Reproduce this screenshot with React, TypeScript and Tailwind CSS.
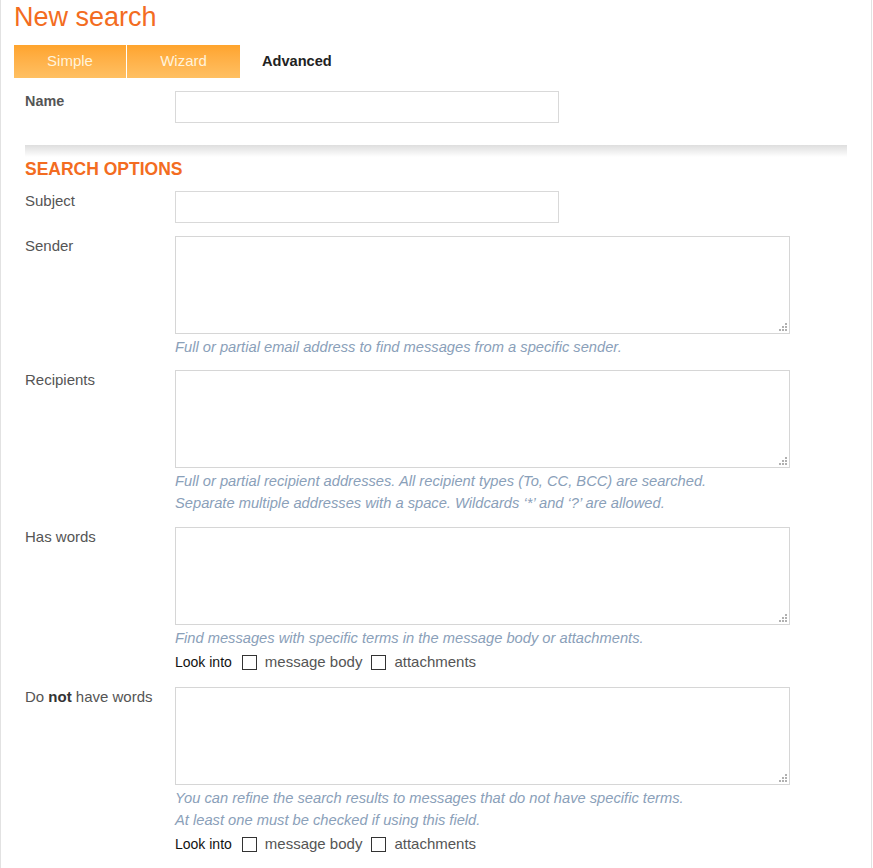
import React from "react";

const hint = "text-[14.7px] italic leading-[22px] text-[#8aa0b9]";

function Grip() {
  // the dotted resize corner drawn in the bottom right of each box
  const dots = [0, 0, 1, 0, 1, 1, 1, 1, 1];
  return (
    <div className="absolute right-[3px] bottom-[3px] grid grid-cols-3 gap-[1px]">
      {dots.map((d, i) => (
        <span
          key={i}
          className={d ? "block w-[2px] h-[2px] bg-[#b0b0b0]" : "block w-[2px] h-[2px]"}
        />
      ))}
    </div>
  );
}

function Area() {
  return (
    <div className="relative w-[615px] h-[98px]">
      <textarea className="block w-full h-full resize-none border border-[#d6d6d6] bg-white outline-none" />
      <Grip />
    </div>
  );
}

function LookInto() {
  return (
    <div className="mt-[1px] flex items-center h-[24px] text-[15px]">
      <span className="text-[14px] text-[#111]">Look into</span>
      <span className="ml-[10px] w-[15px] h-[15px] border border-[#333] bg-white" />
      <span className="ml-[8px] text-[#555]">message body</span>
      <span className="ml-[9px] w-[15px] h-[15px] border border-[#333] bg-white" />
      <span className="ml-[8px] text-[#555]">attachments</span>
    </div>
  );
}

function Row({ label, children }: { label: React.ReactNode; children: React.ReactNode }) {
  return (
    <div className="flex">
      <div className="w-[150px] shrink-0 text-[15px] leading-[20px] text-[#555]">{label}</div>
      <div>{children}</div>
    </div>
  );
}

export default function App() {
  return (
    <div
      className="w-[872px] min-h-screen bg-white border-x border-[#e2e2e2]"
      style={{ fontFamily: '"Liberation Sans", Arial, sans-serif' }}
    >
      <h1 className="pl-[13px] pt-[1px] text-[27px] leading-[32px] text-[#f36c21]">New search</h1>

      {/* TABS */}
      <div className="flex items-center mt-[12px] ml-[13px] h-[33px] text-[15px]">
        <div className="w-[112px] h-full flex items-center justify-center bg-gradient-to-b from-[#ffa42c] to-[#ffc062] text-[#fff3dc]">
          Simple
        </div>
        <div className="w-[1px] h-full bg-white" />
        <div className="w-[113px] h-full flex items-center justify-center bg-gradient-to-b from-[#ffa42c] to-[#ffc062] text-[#fff3dc]">
          Wizard
        </div>
        <div className="ml-[22px] text-[14.6px] font-bold text-[#222]">Advanced</div>
      </div>

      <div className="pl-[24px] pt-[13px]">
        <Row label={<span className="text-[14.4px] font-bold">Name</span>}>
          <input className="block w-[384px] h-[32px] border border-[#d9d9d9] outline-none" />
        </Row>

        <div className="mt-[22px] w-[822px] h-[12px] bg-gradient-to-b from-[#dedede] to-white" />

        <h2 className="mt-[1px] text-[17.5px] leading-[22px] font-bold text-[#f36c21]">SEARCH OPTIONS</h2>

        <div className="mt-[11px] flex flex-col">
          <Row label="Subject">
            <input className="block w-[384px] h-[32px] border border-[#d9d9d9] outline-none" />
          </Row>

          <div className="mt-[13px]">
            <Row label="Sender">
              <Area />
              <p className={`mt-[2px] ${hint}`}>
                Full or partial email address to find messages from a specific sender.
              </p>
            </Row>
          </div>

          <div className="mt-[12px]">
            <Row label="Recipients">
              <Area />
              <p className={`mt-[2px] ${hint}`}>
                Full or partial recipient addresses. All recipient types (To, CC, BCC) are searched.
                <br />
                Separate multiple addresses with a space. Wildcards ‘*’ and ‘?’ are allowed.
              </p>
            </Row>
          </div>

          <div className="mt-[13px]">
            <Row label="Has words">
              <Area />
              <p className={`mt-[2px] ${hint}`}>
                Find messages with specific terms in the message body or attachments.
              </p>
              <LookInto />
            </Row>
          </div>

          <div className="mt-[13px]">
            <Row
              label={
                <>
                  Do <span className="font-bold text-[#333]">not</span> have words
                </>
              }
            >
              <Area />
              <p className={`mt-[2px] ${hint}`}>
                You can refine the search results to messages that do not have specific terms.
                <br />
                At least one must be checked if using this field.
              </p>
              <LookInto />
            </Row>
          </div>
        </div>
      </div>
    </div>
  );
}
